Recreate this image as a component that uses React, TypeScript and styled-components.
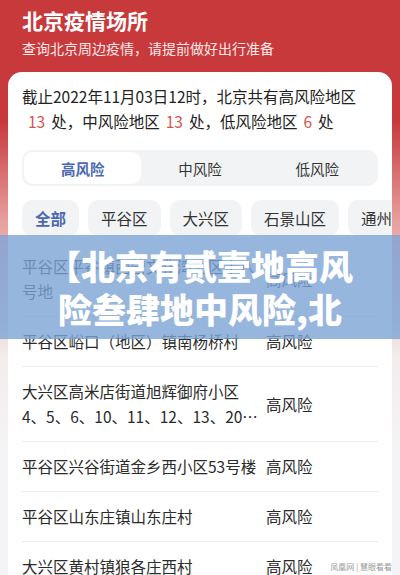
import React from 'react'
import styled, { createGlobalStyle } from 'styled-components'

const GlobalStyle = createGlobalStyle`
  html, body {
    margin: 0;
    padding: 0;
  }
  body {
    font-family: "Noto Sans CJK SC", "Noto Sans", sans-serif;
    color: #222;
  }
`

const tabs = ['高风险', '中风险', '低风险']
const chips = ['全部', '平谷区', '大兴区', '石景山区', '通州区', '朝阳区']

const rows = [
  { name: '平谷区平谷镇西营文化湾北区十八号地', level: '高风险' },
  { name: '平谷区峪口（地区）镇南杨桥村', level: '高风险' },
  { name: '大兴区高米店街道旭辉御府小区4、5、6、10、11、12、13、20号楼', level: '高风险' },
  { name: '平谷区兴谷街道金乡西小区53号楼', level: '高风险' },
  { name: '平谷区山东庄镇山东庄村', level: '高风险' },
  { name: '大兴区黄村镇狼各庄西村', level: '高风险' },
]

const App = () => {
  return (
    <Page>
      <GlobalStyle />
      <Header>
        <Title>北京疫情场所</Title>
        <Subtitle>查询北京周边疫情，请提前做好出行准备</Subtitle>
      </Header>

      <Card>
        <Summary>
          截止2022年11月03日12时，北京共有高风险地区<Num>13</Num>处，中风险地区<Num>13</Num>处，低风险地区<Num>6</Num>处
        </Summary>

        <Tabs>
          {tabs.map((t, i) => (
            <Tab key={t} active={i === 0}>{t}</Tab>
          ))}
        </Tabs>

        <Chips>
          {chips.map((c, i) => (
            <Chip key={c} active={i === 0}>{c}</Chip>
          ))}
        </Chips>

        <List>
          {rows.map((r) => (
            <Row key={r.name}>
              <Name>{r.name}</Name>
              <Level>{r.level}</Level>
            </Row>
          ))}
        </List>
      </Card>

      <Banner>
        <BannerText>【北京有贰壹地高风险叁肆地中风险,北</BannerText>
      </Banner>

      <Watermark>凤凰网 | 慧眼看看</Watermark>
    </Page>
  )
}

export default App

const Page = styled.div`
  position: relative;
  width: 400px;
  height: 575px;
  overflow: hidden;
  background: linear-gradient(180deg, #c7393b 0px, #c7393b 120px, #e9a2a2 225px, #f3eded 360px, #f4f4f6 460px);
`

const Header = styled.div`
  padding: 6px 22px 0;
  color: #fff;
`

const Title = styled.div`
  font-size: 21px;
  line-height: 28px;
  font-weight: 700;
`

const Subtitle = styled.div`
  margin-top: 4px;
  font-size: 14px;
  line-height: 20px;
  color: #fbe9e9;
`

const Card = styled.div`
  margin: 14px 8px 0;
  padding: 12px 14px 0;
  background: #fff;
  border-radius: 14px 14px 0 0;
  min-height: 520px;
  overflow: hidden;
`

const Summary = styled.div`
  font-size: 15.5px;
  line-height: 25px;
  color: #222;
`

const Num = styled.span`
  padding: 0 6px;
  color: #d4524f;
`

const Tabs = styled.div`
  margin-top: 16px;
  height: 36px;
  padding: 2px;
  box-sizing: border-box;
  display: grid;
  grid-template-columns: repeat(3, 1fr);
  background: #f2f3f5;
  border-radius: 10px;
`

const Tab = styled.div<{ active?: boolean }>`
  display: flex;
  align-items: center;
  justify-content: center;
  border-radius: 9px;
  font-size: 14.5px;
  background: ${(p) => (p.active ? '#fff' : 'transparent')};
  color: ${(p) => (p.active ? '#4a69b2' : '#333')};
  font-weight: ${(p) => (p.active ? 600 : 400)};
`

const Chips = styled.div`
  margin: 14px -14px 0 0;
  display: flex;
  gap: 9px;
  overflow: hidden;
`

const Chip = styled.div<{ active?: boolean }>`
  flex: none;
  height: 36px;
  padding: 0 13px;
  display: flex;
  align-items: center;
  border-radius: 10px;
  background: #f2f3f5;
  font-size: 15.5px;
  color: ${(p) => (p.active ? '#4a69b2' : '#333')};
  font-weight: ${(p) => (p.active ? 600 : 400)};
`

const List = styled.div`
  margin-top: 6px;
`

const Row = styled.div`
  display: flex;
  align-items: center;
  padding: 12px 0;
  border-bottom: 1px solid #ececec;
  font-size: 15.5px;
  line-height: 25px;
  color: #2a2a2a;
`

const Name = styled.div`
  flex: 0 0 238px;
  margin-right: 6px;
  display: -webkit-box;
  -webkit-line-clamp: 2;
  -webkit-box-orient: vertical;
  overflow: hidden;
`

const Level = styled.div`
  flex: 1;
`

const Banner = styled.div`
  position: absolute;
  left: 0;
  right: 0;
  top: 235px;
  height: 104px;
  display: flex;
  align-items: center;
  justify-content: center;
  background: rgba(124, 164, 214, 0.8);
`

const BannerText = styled.div`
  width: 320px;
  color: #fff;
  font-size: 34px;
  line-height: 43px;
  font-weight: 900;
  text-align: center;
`

const Watermark = styled.div`
  position: absolute;
  right: 8px;
  bottom: 3px;
  font-size: 8px;
  color: #9a9a9a;
`
